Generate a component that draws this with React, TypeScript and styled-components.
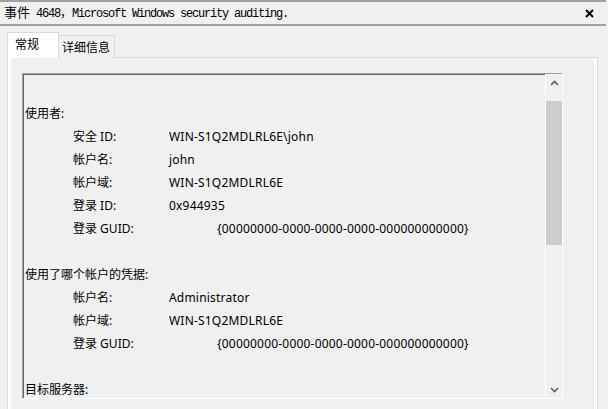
import React from "react";
import styled, { createGlobalStyle } from "styled-components";

const GlobalStyle = createGlobalStyle`
  html, body { margin: 0; padding: 0; background: #f0f0f0; }
  body {
    font-family: "Noto Sans", "Noto Sans CJK SC", sans-serif;
    font-size: 12px;
    color: #000;
  }
  #root { width: 608px; height: 409px; overflow: hidden; }
`;

const Window = styled.div`
  display: flex;
  flex-direction: column;
  width: 608px;
  height: 409px;
  overflow: hidden;
  background: #f0f0f0;
`;

const TitleBar = styled.div`
  display: flex;
  align-items: center;
  justify-content: space-between;
  height: 22px;
  margin-right: 2px;
  padding: 0 12px 0 4px;
  border-top: 2px solid #a0a0a0;
  border-bottom: 2px solid #a0a0a0;
`;

const Title = styled.div`
  display: flex;
  align-items: baseline;
  white-space: pre;
  line-height: 22px;
`;

const TitleCjk = styled.span<{ $size: number }>`
  font-family: "Noto Sans CJK SC", sans-serif;
  font-size: ${(p) => p.$size}px;
`;

const TitleMono = styled.span`
  font-family: "Liberation Mono", monospace;
  font-size: 12px;
  letter-spacing: -1.2px;
`;

const CloseButton = styled.div`
  display: flex;
  align-items: center;
  justify-content: center;
  width: 9px;
  height: 9px;
`;

const Main = styled.div`
  flex: 1;
  min-height: 0;
  display: flex;
  flex-direction: column;
  padding: 6px 10px 0 7px;
`;

const TabStrip = styled.div`
  display: flex;
  align-items: flex-end;
  height: 26px;
  margin-bottom: -1px;
  position: relative;
  z-index: 1;
`;

const Tab = styled.div<{ $active?: boolean }>`
  box-sizing: border-box;
  font-family: "Noto Sans CJK SC", sans-serif;
  font-size: 12px;
  line-height: 22px;
  white-space: nowrap;
  border: 1px solid #d9d9d9;
  border-bottom: none;
  ${(p) =>
    p.$active
      ? `
    width: 52px;
    height: 26px;
    padding-left: 7px;
    background: #ffffff;
  `
      : `
    width: 56px;
    height: 23px;
    padding-left: 3px;
    border-left: none;
    background: #f0f0f0;
  `}
`;

const TabPanel = styled.div`
  flex: 1;
  min-height: 0;
  display: flex;
  background: #ffffff;
  border: 1px solid #d9d9d9;
  border-bottom: none;
  padding: 0 3px;
`;

const Page = styled.div`
  flex: 1;
  background: #f0f0f0;
  padding: 15px 0 0 11px;
`;

const TextBox = styled.div`
  box-sizing: border-box;
  display: flex;
  width: 541px;
  height: 326px;
  background: #f0f0f0;
  border: 1px solid;
  border-color: #a0a0a0 #ffffff #ffffff #a0a0a0;
  box-shadow: inset 1px 1px 0 #696969;
  overflow: hidden;
`;

const Content = styled.div`
  flex: 1;
  min-width: 0;
  padding: 5px 0 0 2px;
  overflow: hidden;
  line-height: 23px;
  white-space: nowrap;
`;

const Blank = styled.div`
  height: 23px;
`;

const Heading = styled.div`
  height: 23px;
`;

const FieldRow = styled.div`
  display: flex;
  height: 23px;
  padding-left: 48px;
`;

const FieldLabel = styled.span<{ $width: number }>`
  flex: none;
  width: ${(p) => p.$width}px;
`;

const FieldValue = styled.span`
  letter-spacing: 0.2px;
`;

const ScrollBar = styled.div`
  box-sizing: border-box;
  flex: none;
  width: 17px;
  display: flex;
  flex-direction: column;
  background: #f0f0f0;
  border-left: 1px solid #ffffff;
`;

const ScrollButton = styled.div`
  flex: none;
  height: 17px;
  display: flex;
  align-items: center;
  justify-content: center;
`;

const ScrollTrack = styled.div`
  flex: 1;
  padding-top: 10px;
`;

const ScrollThumb = styled.div`
  height: 144px;
  background: #cdcdcd;
`;

type Line =
  | { kind: "blank" }
  | { kind: "head"; text: string }
  | { kind: "field"; label: string; value: string; wide?: boolean };

const GUID = "{00000000-0000-0000-0000-000000000000}";

const lines: Line[] = [
  { kind: "blank" },
  { kind: "head", text: "使用者:" },
  { kind: "field", label: "安全 ID:", value: "WIN-S1Q2MDLRL6E\\john" },
  { kind: "field", label: "帐户名:", value: "john" },
  { kind: "field", label: "帐户域:", value: "WIN-S1Q2MDLRL6E" },
  { kind: "field", label: "登录 ID:", value: "0x944935" },
  { kind: "field", label: "登录 GUID:", value: GUID, wide: true },
  { kind: "blank" },
  { kind: "head", text: "使用了哪个帐户的凭据:" },
  { kind: "field", label: "帐户名:", value: "Administrator" },
  { kind: "field", label: "帐户域:", value: "WIN-S1Q2MDLRL6E" },
  { kind: "field", label: "登录 GUID:", value: GUID, wide: true },
  { kind: "blank" },
  { kind: "head", text: "目标服务器:" },
];

const Chevron = ({ up }: { up?: boolean }) => (
  <svg width="9" height="6" viewBox="0 0 9 6">
    <path
      d={up ? "M1 5 L4.5 1.5 L8 5" : "M1 1 L4.5 4.5 L8 1"}
      fill="none"
      stroke="#606060"
      strokeWidth="1.7"
    />
  </svg>
);

export default function App() {
  return (
    <>
      <GlobalStyle />
      <Window>
        <TitleBar>
          <Title>
            <TitleCjk $size={13}>事件</TitleCjk>
            <TitleMono> 4648</TitleMono>
            <TitleCjk $size={12}>，</TitleCjk>
            <TitleMono>Microsoft Windows security auditing.</TitleMono>
          </Title>
          <CloseButton>
            <svg width="9" height="9" viewBox="0 0 9 9">
              <path d="M1 1 L8 8 M8 1 L1 8" stroke="#000" strokeWidth="2" />
            </svg>
          </CloseButton>
        </TitleBar>
        <Main>
          <TabStrip>
            <Tab $active>常规</Tab>
            <Tab>详细信息</Tab>
          </TabStrip>
          <TabPanel>
            <Page>
              <TextBox>
                <Content>
                  {lines.map((line, i) => {
                    if (line.kind === "blank") return <Blank key={i} />;
                    if (line.kind === "head")
                      return <Heading key={i}>{line.text}</Heading>;
                    return (
                      <FieldRow key={i}>
                        <FieldLabel $width={line.wide ? 144 : 96}>
                          {line.label}
                        </FieldLabel>
                        <FieldValue>{line.value}</FieldValue>
                      </FieldRow>
                    );
                  })}
                </Content>
                <ScrollBar>
                  <ScrollButton>
                    <Chevron up />
                  </ScrollButton>
                  <ScrollTrack>
                    <ScrollThumb />
                  </ScrollTrack>
                  <ScrollButton>
                    <Chevron />
                  </ScrollButton>
                </ScrollBar>
              </TextBox>
            </Page>
          </TabPanel>
        </Main>
      </Window>
    </>
  );
}
